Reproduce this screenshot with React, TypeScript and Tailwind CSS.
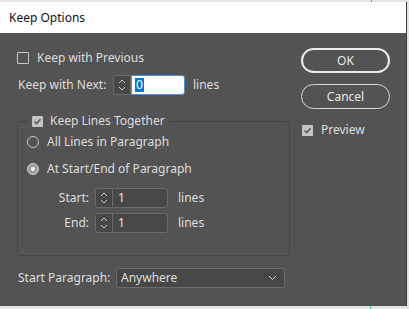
import React from "react";

const Spinner = ({ value, active }: { value: string; active?: boolean }) => {
  return (
    <div className="flex h-5">
      <div className="flex w-[18px] flex-col items-center justify-center rounded-l-[3px] border border-[#6b6b6b] bg-[#474747]">
        <svg width="8" height="14" viewBox="0 0 8 14" fill="none" stroke="#c8c8c8" strokeWidth="1">
          <path d="M1 5 L4 2 L7 5" />
          <path d="M1 9 L4 12 L7 9" />
        </svg>
      </div>
      {active ? (
        <div className="flex w-[54px] items-center rounded-r-[3px] border border-[#4a8fd8] bg-white pl-[3px]">
          <span className="bg-[#0078d7] px-px leading-[14px] text-white">{value}</span>
        </div>
      ) : (
        <div className="flex w-[55px] items-center rounded-r-[3px] border border-l-0 border-[#6b6b6b] bg-[#474747] pl-[5px] text-[#e6e6e6]">
          {value}
        </div>
      )}
    </div>
  );
};

const Check = ({ checked }: { checked?: boolean }) =>
  checked ? (
    <div className="flex h-[11px] w-[11px] items-center justify-center rounded-[1px] bg-[#c4c4c4]">
      <svg width="9" height="9" viewBox="0 0 9 9" fill="none" stroke="#555" strokeWidth="1.5">
        <path d="M1.5 4.5 L3.6 6.6 L7.5 2.2" />
      </svg>
    </div>
  ) : (
    <div className="h-[12px] w-[12px] rounded-[1px] border border-[#c8c8c8]" />
  );

const Radio = ({ checked }: { checked?: boolean }) =>
  checked ? (
    <div className="flex h-[12px] w-[12px] items-center justify-center rounded-full border border-[#cfcfcf] bg-[#9e9e9e]">
      <div className="h-[4px] w-[4px] rounded-full bg-[#f2f2f2]" />
    </div>
  ) : (
    <div className="h-[12px] w-[12px] rounded-full border border-[#c8c8c8]" />
  );

export default function App() {
  return (
    <div className="relative h-[309px] w-[409px] bg-[#e4e4e4] pt-[2px] text-[12px] text-[#dedede]" style={{ fontFamily: '"Noto Sans", "Liberation Sans", sans-serif' }}>
      <div className="absolute left-[371px] top-0 h-[2px] w-px bg-[#29b6c8]" />
      <div className="absolute bottom-0 left-[370px] h-[3px] w-px bg-[#29b6c8]" />
      <div className="flex h-[304px] w-[407px] flex-col border-r border-[#3a3a3a] bg-[#535353]">
        <div className="flex h-[31px] items-center bg-white pl-[9px] text-[12px] text-[#111]">Keep Options</div>

        <div className="flex">
          <div className="flex w-[290px] flex-col pl-[17px] pt-[15px]">
            <div className="flex h-5 items-center gap-[8px]">
              <Check />
              <span>Keep with Previous</span>
            </div>

            <div className="mt-[7px] flex h-5 items-center">
              <span className="w-[96px] pl-px">Keep with Next:</span>
              <Spinner value="0" active />
              <span className="ml-[8px]">lines</span>
            </div>

            <fieldset className="mt-[18px] h-[143px] rounded-[3px] border border-[#444]">
              <legend className="ml-[10px] flex h-4 items-center gap-[7px] px-[4px]">
                <Check checked />
                <span>Keep Lines Together</span>
              </legend>

              <div className="mt-[3px] flex h-5 items-center gap-[8px] pl-[9px]">
                <Radio />
                <span>All Lines in Paragraph</span>
              </div>
              <div className="mt-[7px] flex h-5 items-center gap-[8px] pl-[9px]">
                <Radio checked />
                <span>At Start/End of Paragraph</span>
              </div>

              <div className="mt-[9px] flex h-5 items-center">
                <span className="ml-[30px] w-[41px] text-right">Start:</span>
                <div className="ml-[6px]">
                  <Spinner value="1" />
                </div>
                <span className="ml-[10px]">lines</span>
              </div>
              <div className="mt-[5px] flex h-5 items-center">
                <span className="ml-[30px] w-[41px] text-right">End:</span>
                <div className="ml-[6px]">
                  <Spinner value="1" />
                </div>
                <span className="ml-[10px]">lines</span>
              </div>
            </fieldset>

            <div className="mt-[12px] flex h-5 items-center">
              <span className="w-[99px] pl-px">Start Paragraph:</span>
              <div className="flex h-5 w-[169px] items-center justify-between rounded-[3px] border border-[#6b6b6b] bg-[#474747] pl-[4px] pr-[7px]">
                <span>Anywhere</span>
                <svg width="9" height="6" viewBox="0 0 9 6" fill="none" stroke="#cfcfcf" strokeWidth="1">
                  <path d="M1 1 L4.5 4.5 L8 1" />
                </svg>
              </div>
            </div>
          </div>

          <div className="ml-[11px] flex w-[89px] flex-col pt-[15px]">
            <button className="flex h-[25px] items-center justify-center rounded-full border-2 border-[#ececec] text-[#e8e8e8]">OK</button>
            <button className="mt-[11px] flex h-[25px] items-center justify-center rounded-full border border-[#d6d6d6] text-[#e8e8e8]">Cancel</button>
            <div className="mt-[11px] flex h-5 items-center gap-[8px] pl-px">
              <Check checked />
              <span>Preview</span>
            </div>
          </div>
        </div>
      </div>
    </div>
  );
}
